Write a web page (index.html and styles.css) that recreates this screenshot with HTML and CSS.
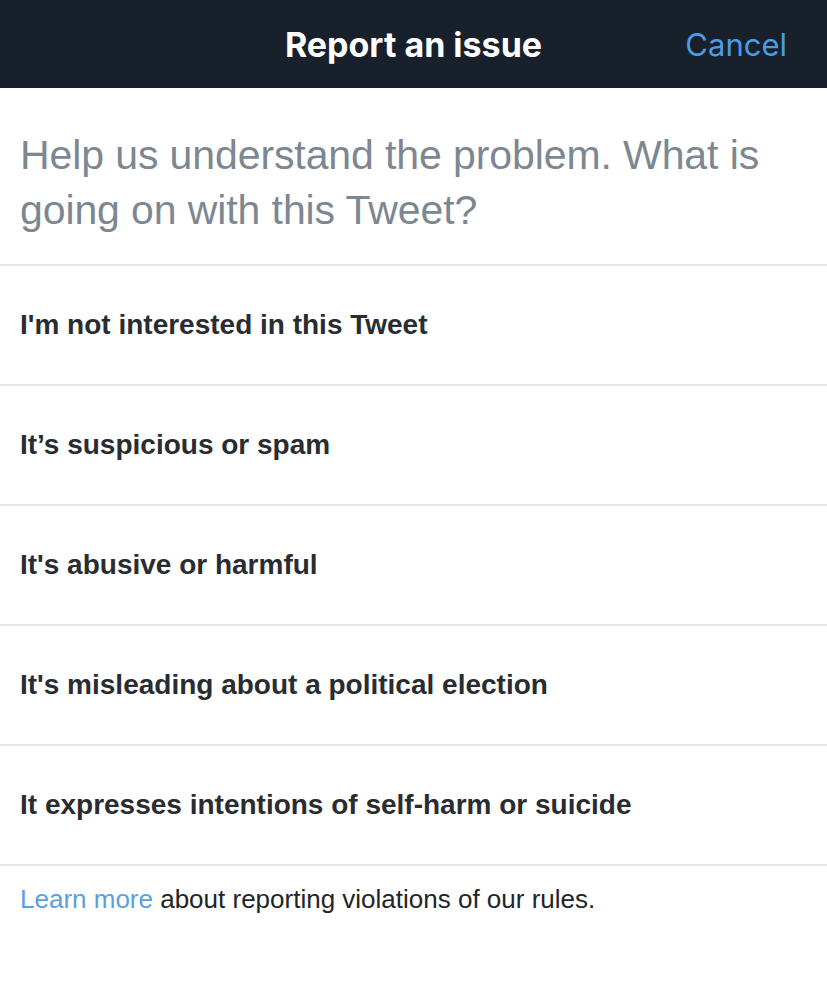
FILE: index.html
```html
<!DOCTYPE html>
<html>
<head>
<meta charset="utf-8">
<link rel="stylesheet" href="styles.css">
</head>
<body>
<header class="bar">
  <div class="bar-side"></div>
  <h1 class="bar-title">Report an issue</h1>
  <div class="bar-side bar-right"><span class="cancel">Cancel</span></div>
</header>
<main>
  <p class="prompt">Help us understand the problem. What is going on with this Tweet?</p>
  <ul class="options">
    <li class="option">I'm not interested in this Tweet</li>
    <li class="option">It’s suspicious or spam</li>
    <li class="option">It's abusive or harmful</li>
    <li class="option">It's misleading about a political election</li>
    <li class="option">It expresses intentions of self-harm or suicide</li>
  </ul>
  <p class="footer"><span class="link">Learn more</span> about reporting violations of our rules.</p>
</main>
</body>
</html>
```

FILE: styles.css
```css
html, body {
  margin: 0;
  padding: 0;
  background: #ffffff;
  font-family: "Liberation Sans", Arial, sans-serif;
}
.bar {
  height: 88px;
  background: #18202b;
  display: grid;
  grid-template-columns: 1fr auto 1fr;
  align-items: center;
}
.bar-title {
  margin: 0;
  color: #ffffff;
  font-family: "Inter", "Liberation Sans", sans-serif;
  font-weight: 700;
  font-size: 34px;
  letter-spacing: 0;
}
.bar-right {
  display: flex;
  justify-content: flex-end;
  padding-right: 40px;
}
.cancel {
  color: #4a9de3;
  font-family: "Inter", "Liberation Sans", sans-serif;
  font-size: 31px;
  font-weight: 400;
}
.prompt {
  margin: 0;
  padding: 40px 20px 26px;
  color: #7d8792;
  font-size: 41px;
  line-height: 55px;
  letter-spacing: -0.1px;
  border-bottom: 2px solid #e3e6ea;
}
.options {
  list-style: none;
  margin: 0;
  padding: 0;
}
.option {
  height: 118px;
  display: flex;
  align-items: center;
  padding: 0 20px;
  border-bottom: 2px solid #e3e6ea;
  color: #292c30;
  font-weight: 700;
  font-size: 28px;
}
.footer {
  margin: 0;
  padding: 18px 20px;
  font-size: 26px;
  color: #222428;
}
.link {
  color: #5a9fe0;
}
```
